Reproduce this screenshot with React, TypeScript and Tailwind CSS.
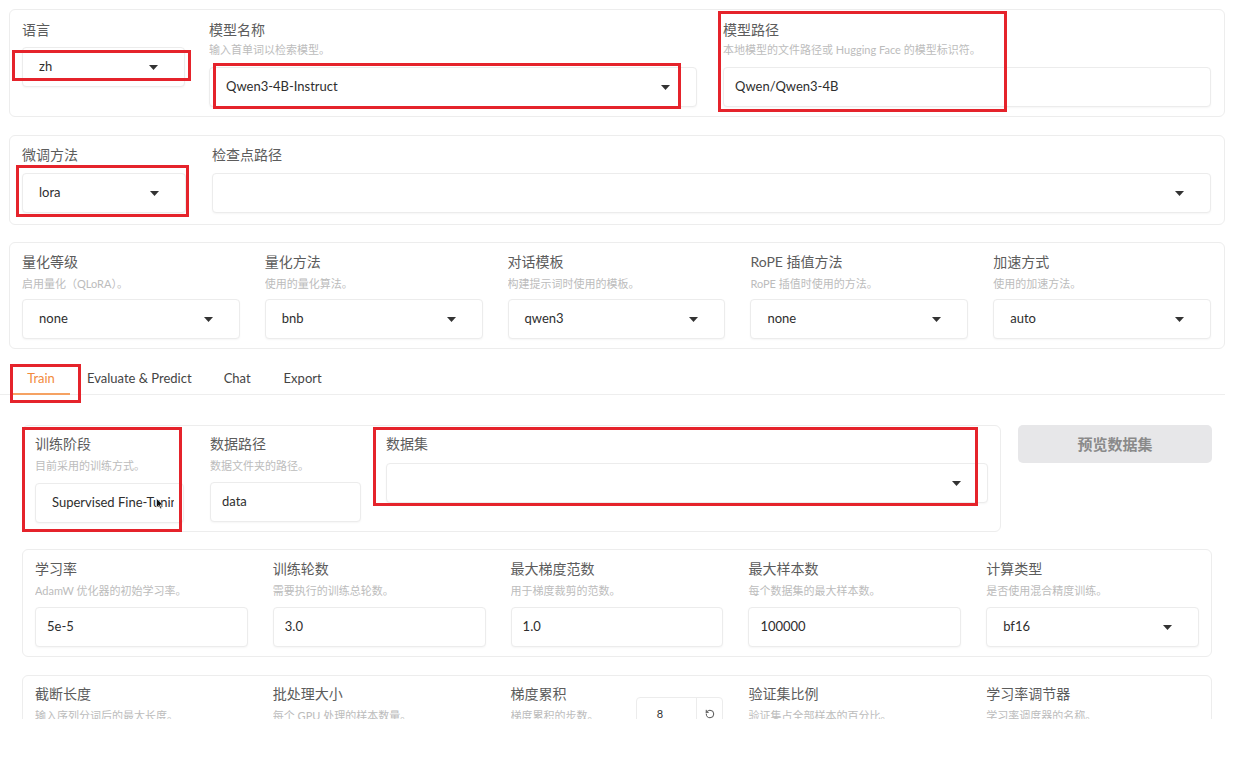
import React from "react";
import { RotateCcw } from "lucide-react";

const Arrow = () => (
  <svg width="9" height="5" viewBox="0 0 9 5" className="shrink-0">
    <path d="M0 0h9L4.5 5z" fill="#333" />
  </svg>
);

function Label({ children }: { children: React.ReactNode }) {
  return (
    <div className="h-[20px] leading-[20px] text-[14px] text-[#5c5c5c] whitespace-nowrap">{children}</div>
  );
}

function Hint({ children, className = "" }: { children: React.ReactNode; className?: string }) {
  return (
    <div className={"h-[18px] leading-[18px] text-[11px] text-[#bcbcbc] whitespace-nowrap overflow-hidden " + className}>
      {children}
    </div>
  );
}

function Dropdown({ value, className = "" }: { value: string; className?: string }) {
  return (
    <div
      className={
        "h-[40px] bg-white border border-[#ececec] rounded-[4px] shadow-[0_1px_2px_rgba(0,0,0,0.04)] flex items-center justify-between pl-[16px] pr-[26px] text-[13px] text-[#2e2e2e] " +
        className
      }
    >
      <span className="whitespace-nowrap">{value}</span>
      <Arrow />
    </div>
  );
}

function Textbox({ value, className = "" }: { value: string; className?: string }) {
  return (
    <div
      className={
        "h-[40px] bg-white border border-[#ececec] rounded-[4px] shadow-[0_1px_2px_rgba(0,0,0,0.04)] flex items-center px-[11px] text-[13px] text-[#2e2e2e] " +
        className
      }
    >
      <span className="whitespace-nowrap">{value}</span>
    </div>
  );
}

function Panel({ children, className = "" }: { children: React.ReactNode; className?: string }) {
  return (
    <div className={"border border-[#ededed] rounded-[6px] bg-white " + className}>{children}</div>
  );
}

function RedBox({ l, t, w, h }: { l: number; t: number; w: number; h: number }) {
  return (
    <div
      className="absolute border-[3px] border-[#e5232b] pointer-events-none"
      style={{ left: l, top: t, width: w, height: h }}
    />
  );
}

export default function App() {
  return (
    <div className="w-[1235px] h-[757px] bg-white relative overflow-hidden font-['Lato','Noto_Sans_CJK_SC',sans-serif]">
      <div className="h-[719px] overflow-hidden">
        <div className="pt-[9px] pl-[9px] pr-[10px] flex flex-col">
          {/* Panel 1 */}
          <Panel className="pt-[10px] pb-[9px] pl-[12px] pr-[13px]">
            <div className="flex">
              <div className="w-[163px] flex flex-col">
                <Label>语言</Label>
                <Dropdown value="zh" className="mt-[7px]" />
              </div>
              <div className="w-[488px] ml-[24px] flex flex-col">
                <Label>模型名称</Label>
                <Hint className="mt-[1px]">输入首单词以检索模型。</Hint>
                <Dropdown value="Qwen3-4B-Instruct" className="mt-[8px] pl-[12px]" />
              </div>
              <div className="w-[488px] ml-[26px] flex flex-col">
                <Label>模型路径</Label>
                <Hint className="mt-[1px]">本地模型的文件路径或 Hugging Face 的模型标识符。</Hint>
                <Textbox value="Qwen/Qwen3-4B" className="mt-[8px]" />
              </div>
            </div>
          </Panel>

          {/* Panel 2 */}
          <Panel className="mt-[18px] pt-[9px] pb-[11px] pl-[12px] pr-[13px]">
            <div className="flex">
              <div className="w-[164px] flex flex-col">
                <Label>微调方法</Label>
                <Dropdown value="lora" className="mt-[8px]" />
              </div>
              <div className="flex-1 ml-[26px] flex flex-col">
                <Label>检查点路径</Label>
                <Dropdown value="" className="mt-[8px] pr-[25px]" />
              </div>
            </div>
          </Panel>

          {/* Panel 3 */}
          <Panel className="mt-[17px] pt-[9px] pb-[9px] pl-[12px] pr-[13px]">
            <div className="grid grid-cols-5 gap-[25px]">
              {[
                ["量化等级", "启用量化（QLoRA）。", "none"],
                ["量化方法", "使用的量化算法。", "bnb"],
                ["对话模板", "构建提示词时使用的模板。", "qwen3"],
                ["RoPE 插值方法", "RoPE 插值时使用的方法。", "none"],
                ["加速方式", "使用的加速方法。", "auto"],
              ].map(([l, h, v]) => (
                <div key={l + v} className="flex flex-col">
                  <Label>{l}</Label>
                  <Hint className="mt-[3px]">{h}</Hint>
                  <Dropdown value={v} className="mt-[6px]" />
                </div>
              ))}
            </div>
          </Panel>
        </div>

        {/* Tabs */}
        <div className="mt-[15px] w-[1225px] border-b border-[#eeeeee] flex pl-[12px] gap-[3px]">
          <div className="relative h-[30px] w-[58px] flex items-center justify-center text-[13px] text-[#f28a3c]">
            Train
            <div className="absolute left-0 right-0 bottom-[-1px] h-[2px] bg-[#f5a263]" />
          </div>
          <div className="h-[30px] px-[14px] flex items-center text-[13px] text-[#444]">Evaluate &amp; Predict</div>
          <div className="h-[30px] px-[15px] flex items-center text-[13px] text-[#444]">Chat</div>
          <div className="h-[30px] px-[15px] flex items-center text-[13px] text-[#444]">Export</div>
        </div>

        <div className="pl-[22px] pr-[23px] flex flex-col">
          {/* Train row */}
          <div className="mt-[30px] flex gap-[17px] items-start">
            <Panel className="flex-1 pt-[8px] pb-[8px] pl-[12px] pr-[12px]">
              <div className="flex">
                <div className="w-[149px] flex flex-col">
                  <Label>训练阶段</Label>
                  <Hint className="mt-[3px]">目前采用的训练方式。</Hint>
                  <div className="relative mt-[8px] h-[40px] bg-white border border-[#ececec] rounded-[4px] shadow-[0_1px_2px_rgba(0,0,0,0.04)] flex items-center pl-[16px] text-[13px] text-[#2e2e2e] overflow-hidden">
                    <span className="block w-[122px] whitespace-nowrap overflow-hidden">Supervised Fine-Tuning</span>
                    <svg width="8" height="11" viewBox="0 0 8 11" className="absolute left-[120px] top-[14px]">
                      <path d="M0.5 0.5v9l2.3-2.1 1.6 3.3 1.3-0.6-1.6-3.2h3.2z" fill="#111" stroke="#fff" strokeWidth="0.6" />
                    </svg>
                  </div>
                </div>
                <div className="w-[151px] ml-[26px] flex flex-col">
                  <Label>数据路径</Label>
                  <Hint className="mt-[3px]">数据文件夹的路径。</Hint>
                  <Textbox value="data" className="mt-[7px]" />
                </div>
                <div className="flex-1 ml-[25px] flex flex-col">
                  <Label>数据集</Label>
                  <Dropdown value="" className="mt-[9px]" />
                </div>
              </div>
            </Panel>
            <div className="w-[194px] h-[38px] rounded-[5px] bg-[#e7e7e9] flex items-center justify-center text-[15px] font-bold text-[#8a8a8a]">
              预览数据集
            </div>
          </div>

          {/* Panel 5 */}
          <Panel className="mt-[17px] pt-[9px] pb-[9px] px-[12px]">
            <div className="grid grid-cols-5 gap-[25px]">
              {[
                ["学习率", "AdamW 优化器的初始学习率。", "5e-5", false],
                ["训练轮数", "需要执行的训练总轮数。", "3.0", false],
                ["最大梯度范数", "用于梯度裁剪的范数。", "1.0", false],
                ["最大样本数", "每个数据集的最大样本数。", "100000", false],
                ["计算类型", "是否使用混合精度训练。", "bf16", true],
              ].map(([l, h, v, dd]) => (
                <div key={l as string} className="flex flex-col">
                  <Label>{l}</Label>
                  <Hint className="mt-[3px]">{h}</Hint>
                  {dd ? (
                    <Dropdown value={v as string} className="mt-[7px] pl-[11px]" />
                  ) : (
                    <Textbox value={v as string} className="mt-[7px]" />
                  )}
                </div>
              ))}
            </div>
          </Panel>

          {/* Panel 6 */}
          <Panel className="mt-[18px] pt-[8px] pb-[9px] px-[12px]">
            <div className="grid grid-cols-5 gap-[25px]">
              <div className="flex flex-col">
                <Label>截断长度</Label>
                <Hint className="mt-[3px]">输入序列分词后的最大长度。</Hint>
              </div>
              <div className="flex flex-col">
                <Label>批处理大小</Label>
                <Hint className="mt-[3px]">每个 GPU 处理的样本数量。</Hint>
              </div>
              <div className="flex justify-between">
                <div className="flex flex-col">
                  <Label>梯度累积</Label>
                  <Hint className="mt-[3px]">梯度累积的步数。</Hint>
                </div>
                <div className="mt-[13px] w-[87px] h-[30px] border border-[#ececec] rounded-[4px] flex text-[11px] text-[#333] bg-white">
                  <div className="flex-1 flex items-center justify-center pr-[14px] pt-[4px]">8</div>
                  <div className="w-[26px] border-l border-[#ececec] flex items-center justify-center pt-[3px]">
                    <RotateCcw size={10} strokeWidth={2.2} color="#444" />
                  </div>
                </div>
              </div>
              <div className="flex flex-col">
                <Label>验证集比例</Label>
                <Hint className="mt-[3px]">验证集占全部样本的百分比。</Hint>
              </div>
              <div className="flex flex-col">
                <Label>学习率调节器</Label>
                <Hint className="mt-[3px]">学习率调度器的名称。</Hint>
              </div>
            </div>
          </Panel>
        </div>
      </div>

      {/* annotation boxes */}
      <RedBox l={12} t={50} w={179} h={31} />
      <RedBox l={213} t={63} w={468} h={46} />
      <RedBox l={718} t={11} w={289} h={101} />
      <RedBox l={16} t={165} w={173} h={52} />
      <RedBox l={10} t={364} w={71} h={39} />
      <RedBox l={22} t={427} w={160} h={105} />
      <RedBox l={373} t={427} w={605} h={79} />
    </div>
  );
}
